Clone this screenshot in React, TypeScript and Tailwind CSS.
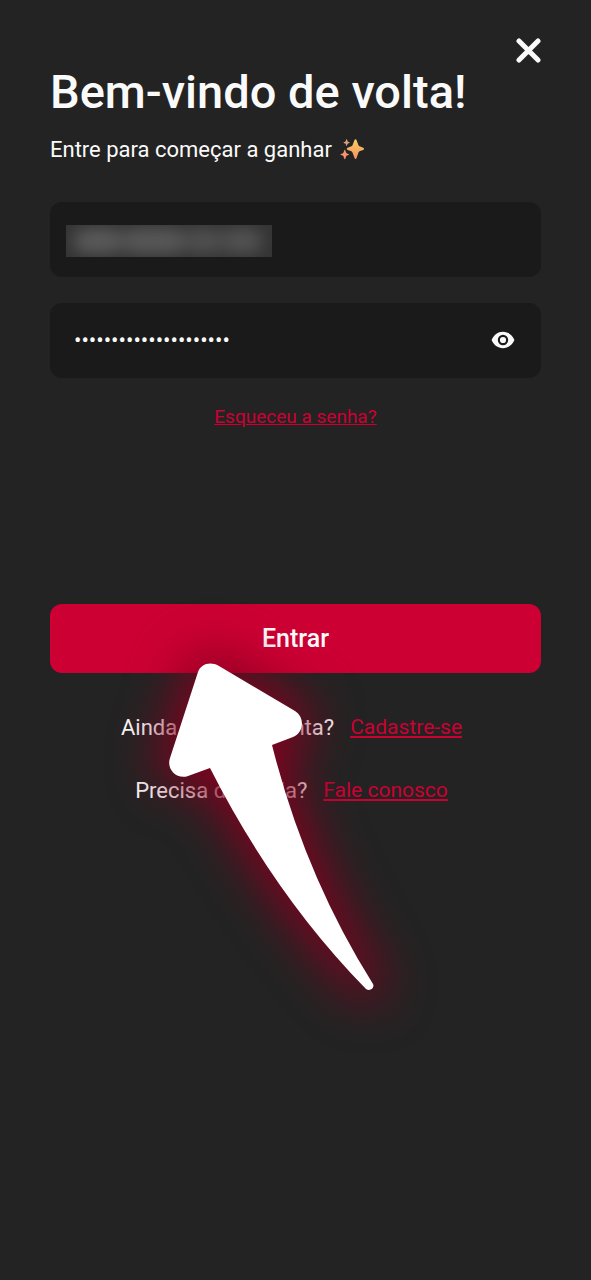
import { useState } from "react";

function CloseIcon() {
  return (
    <svg viewBox="0 0 25 25" className="w-[25px] h-[25px]" aria-hidden="true">
      <path d="M3 3L22 22M22 3L3 22" stroke="#fafafa" strokeWidth="5" strokeLinecap="round" />
    </svg>
  );
}

function Sparkles() {
  return (
    <svg viewBox="0 0 24 24" className="w-6 h-6 shrink-0" role="img" aria-label="brilhos">
      <defs>
        <linearGradient id="spark" x1="0" y1="0" x2="0" y2="1">
          <stop offset="0" stopColor="#f6cf62" />
          <stop offset="1" stopColor="#f58f62" />
        </linearGradient>
      </defs>
      <path
        fill="url(#spark)"
        d="M14.4 2.200c.6-1.200 1.700-1.200 2.200 0l1.700 4.500c.4 1 .9 1.500 1.900 1.900l3 1.200c1.200.5 1.200 1.600 0 2.100l-3 1.200c-1 .4-1.500.9-1.900 1.900l-1.700 4.900c-.5 1.300-1.600 1.300-2.100 0l-1.800-4.900c-.4-1-.9-1.500-1.900-1.900l-3.200-1.200c-1.200-.5-1.200-1.600 0-2.100l3.200-1.200c1-.4 1.500-.9 1.900-1.900z"
      />
      <path
        fill="#f5956a"
        d="M4.300 12.300c.2-.6.8-.6 1 0l.8 2.200c.2.5.4.7.9.9l1.500.6c.6.2.6.8 0 1l-1.500.6c-.5.2-.7.4-.9.9l-.8 2.300c-.2.6-.8.6-1 0l-.8-2.300c-.2-.5-.4-.7-.9-.9L1 17c-.6-.2-.6-.8 0-1l1.600-.6c.5-.2.7-.4.9-.9z"
      />
      <path
        fill="#d9a077"
        d="M6.200 1.600c.2-.5.6-.5.8 0l.5 1.400c.1.4.3.5.6.7l1.300.5c.5.2.5.6 0 .8l-1.300.5c-.3.1-.5.3-.6.6L7 7.500c-.2.5-.6.5-.8 0l-.5-1.400c-.1-.3-.3-.5-.6-.6L3.800 5c-.5-.2-.5-.6 0-.8l1.300-.5c.3-.2.5-.3.6-.7z"
      />
    </svg>
  );
}

function EyeIcon() {
  return (
    <svg viewBox="0 0 24 20" className="w-6 h-5" aria-hidden="true">
      <path
        fill="#fafafa"
        fillRule="evenodd"
        d="M12 .8C6.800 .8 2.600 4.200 .6 9c2 4.800 6.200 8.200 11.400 8.200s9.400-3.400 11.400-8.200C21.400 4.200 17.200 .8 12 .8zm0 13.400a5.200 5.200 0 1 1 0-10.400 5.200 5.200 0 0 1 0 10.400zm0-2.100a3.100 3.100 0 1 0 0-6.200 3.100 3.100 0 0 0 0 6.200z"
      />
    </svg>
  );
}

const ARROW_PATH =
  "M198 672C201 664 210 661 219 666L295 711C305 717 304 733 293 737L272 745Q305 876 373 984C375 988 370 992 366 989Q275 896 210 768L188 776C177 780 166 769 170 758Z";

function Arrow() {
  return (
    <svg
      viewBox="169 662 205 329"
      className="absolute left-[119px] top-[58px] w-[205px] h-[329px] overflow-visible pointer-events-none"
      aria-hidden="true"
    >
      <defs>
        <filter
          id="glow"
          filterUnits="userSpaceOnUse"
          x="50"
          y="540"
          width="450"
          height="580"
          colorInterpolationFilters="sRGB"
        >
          <feGaussianBlur stdDeviation="25" />
        </filter>
      </defs>
      <path
        fill="#86001f"
        stroke="#86001f"
        strokeWidth="20"
        strokeLinejoin="round"
        filter="url(#glow)"
        d={ARROW_PATH}
      />
      <path fill="#fff" d={ARROW_PATH} />
    </svg>
  );
}

export default function App() {
  const [email, setEmail] = useState("");
  const [password, setPassword] = useState("minhasenhamuitosegura");
  const [visible, setVisible] = useState(false);

  return (
    <main className="min-h-screen overflow-hidden bg-[#232323] px-[50px] pt-[38px] pb-12 font-[Roboto,sans-serif] text-[22px] leading-7 text-[#fafafa]">
      <div className="flex justify-end">
        <button type="button" aria-label="Fechar">
          <CloseIcon />
        </button>
      </div>
      <h1 className="text-[47px] leading-[58px] font-medium">Bem-vindo de volta!</h1>
      <p className="mt-[15px] flex items-center gap-2">
        Entre para começar a ganhar <Sparkles />
      </p>

      <form onSubmit={(e) => e.preventDefault()}>
        <div className="relative mt-[38px]">
          <input
            type="email"
            aria-label="E-mail"
            value={email}
            onChange={(e) => setEmail(e.target.value)}
            className="block w-full h-[75px] rounded-xl bg-[#1a1a1a] px-6 outline-none"
          />
          {/* redacted address */}
          <div className="absolute left-4 top-[23px] w-[206px] h-8 overflow-hidden bg-[#353435] pointer-events-none">
            <div className="flex h-full items-center px-2 blur-[8px]">
              <div className="w-12 h-6 rounded-full bg-[#5c5b5c]" />
              <div className="w-16 h-6 rounded-full bg-[#5a595a]" />
              <div className="w-9 h-6 rounded-full bg-[#525152]" />
              <div className="w-10 h-6 rounded-full bg-[#545354]" />
            </div>
          </div>
        </div>

        <div className="mt-[26px] flex h-[75px] items-center rounded-xl bg-[#1a1a1a] pl-6 pr-[26px]">
          <input
            type={visible ? "text" : "password"}
            aria-label="Senha"
            value={password}
            onChange={(e) => setPassword(e.target.value)}
            className="min-w-0 flex-1 bg-transparent outline-none"
          />
          <button type="button" aria-label="Mostrar senha" onClick={() => setVisible(!visible)}>
            <EyeIcon />
          </button>
        </div>

        <div className="mt-[27px] text-center text-[19px] leading-6">
          <a href="#senha" className="text-[#cc0033] underline">
            Esqueceu a senha?
          </a>
        </div>

        <div className="relative mt-[175px]">
          <button
            type="submit"
            className="block w-full h-[69px] rounded-xl bg-[#cc0033] text-[25px] font-medium"
          >
            Entrar
          </button>
          <div className="mt-[41px] flex flex-col items-center gap-[35px] pr-2">
            <p className="flex gap-4">
              Ainda não tem conta?
              <a href="#cadastro" className="text-[21px] leading-[26px] text-[#cc0033] underline">
                Cadastre-se
              </a>
            </p>
            <p className="flex gap-4">
              Precisa de ajuda?
              <a href="#contato" className="text-[21px] leading-[26px] text-[#cc0033] underline">
                Fale conosco
              </a>
            </p>
          </div>
          <Arrow />
        </div>
      </form>
    </main>
  );
}
